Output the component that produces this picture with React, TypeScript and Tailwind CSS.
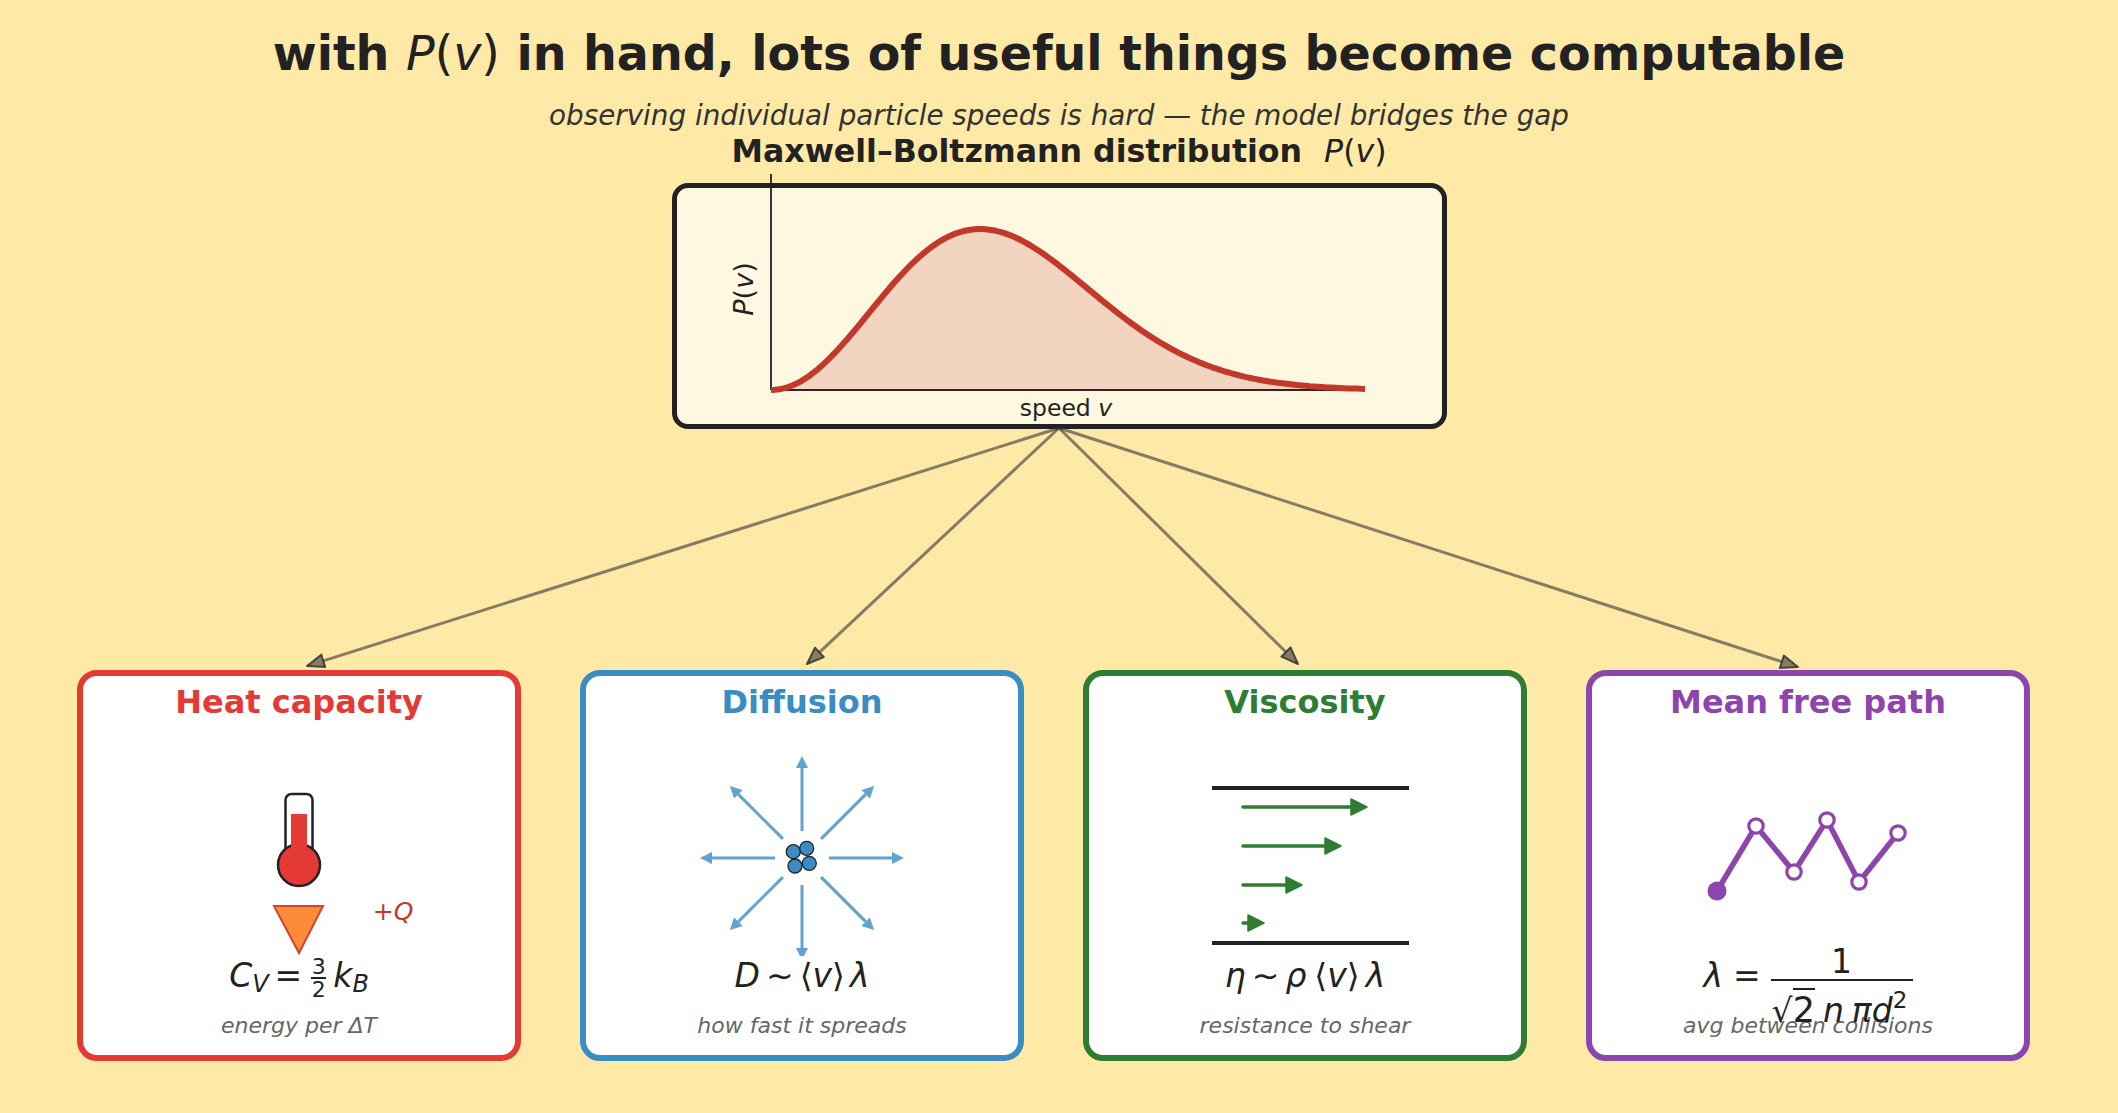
const AXIS_X0 = 94
const AXIS_X1 = 688
const AXIS_Y = 202
const PEAK_H = 161
const V_MAX = 2.84

// Maxwell–Boltzmann shape, v² e^{-v²}, normalised so the peak is 1
const curvePoints = Array.from({ length: 141 }, (_, i) => {
  const v = (V_MAX * i) / 140
  const f = (v * v * Math.exp(-v * v)) / Math.exp(-1)
  return [AXIS_X0 + ((AXIS_X1 - AXIS_X0) * v) / V_MAX, AXIS_Y - PEAK_H * f]
})
const curveLine = curvePoints.map(([x, y], i) => `${i ? 'L' : 'M'}${x.toFixed(1)},${y.toFixed(1)}`).join(' ')
const curveFill = `${curveLine} L${AXIS_X1},${AXIS_Y} L${AXIS_X0},${AXIS_Y} Z`

const arrowHead = (x1: number, y1: number, x2: number, y2: number, len: number, half: number) => {
  const d = Math.hypot(x2 - x1, y2 - y1)
  const ux = (x2 - x1) / d
  const uy = (y2 - y1) / d
  const bx = x2 - ux * len
  const by = y2 - uy * len
  return {
    bx,
    by,
    points: `${x2},${y2} ${bx - uy * half},${by + ux * half} ${bx + uy * half},${by - ux * half}`,
  }
}

const FAN_START = { x: 1059, y: 428 }
const FAN_TIPS = [
  { x: 307, y: 666 },
  { x: 807, y: 664 },
  { x: 1298, y: 664 },
  { x: 1798, y: 667 },
]

const ConnectorArrows = () => (
  <svg className="pointer-events-none absolute left-0 top-0" width={2118} height={1113}>
    {FAN_TIPS.map((tip) => {
      const head = arrowHead(FAN_START.x, FAN_START.y, tip.x, tip.y, 17, 6.5)
      return (
        <g key={tip.x}>
          <line
            x1={FAN_START.x}
            y1={FAN_START.y}
            x2={head.bx}
            y2={head.by}
            stroke="#333"
            strokeOpacity={0.6}
            strokeWidth={3}
          />
          <polygon
            points={head.points}
            fill="#333"
            fillOpacity={0.6}
            stroke="#333"
            strokeOpacity={0.85}
            strokeWidth={2}
            strokeLinejoin="round"
          />
        </g>
      )
    })}
  </svg>
)

const DistributionPlot = () => (
  <div className="mx-auto mt-[14px] h-[246px] w-[775px] rounded-[16px] border-[5px] border-[#222] bg-[#fff8e1]">
    <svg width={765} height={236} className="overflow-visible">
      <path d={curveFill} fill="#f3d4c0" />
      <line x1={AXIS_X0} y1={-14} x2={AXIS_X0} y2={AXIS_Y} stroke="#222" strokeWidth={1.8} />
      <line x1={AXIS_X0} y1={AXIS_Y} x2={AXIS_X1} y2={AXIS_Y} stroke="#3a2020" strokeWidth={1.8} />
      <path d={curveLine} fill="none" stroke="#c0392b" strokeWidth={6} strokeLinejoin="round" />
      <text
        x={66}
        y={101}
        transform="rotate(-90 66 101)"
        textAnchor="middle"
        dominantBaseline="central"
        fontSize={27}
        fill="#222"
      >
        <tspan fontStyle="italic">P</tspan>(<tspan fontStyle="italic">v</tspan>)
      </text>
      <text x={389} y={228} textAnchor="middle" fontSize={23.5} fill="#222">
        speed <tspan fontStyle="italic">v</tspan>
      </text>
    </svg>
  </div>
)

const Thermometer = () => (
  <svg width={432} height={236}>
    <rect x={202.5} y={74} width={27} height={62} rx={6} fill="#fff" stroke="#222" strokeWidth={2.5} />
    <circle cx={216} cy={145} r={21} fill="#e53935" stroke="#222" strokeWidth={2.5} />
    <rect x={208} y={94} width={16} height={46} fill="#e53935" />
    <polygon points="191,186 240,186 216,233" fill="#fd8c3a" stroke="#d2452a" strokeWidth={2} strokeLinejoin="miter" />
    <text x={310} y={200} textAnchor="middle" fontSize={25} fontStyle="italic" fill="#c0392b">
      +Q
    </text>
  </svg>
)

const PARTICLES = [
  [-8.7, -6.3],
  [4.7, -9.7],
  [-7, 8],
  [7.3, 5.3],
]

const SpreadingParticles = () => {
  const cx = 216
  const cy = 138
  return (
    <svg width={432} height={236}>
      {Array.from({ length: 8 }).map((_, i) => {
        const a = (i * Math.PI) / 4
        const x1 = cx + 27 * Math.cos(a)
        const y1 = cy + 27 * Math.sin(a)
        const x2 = cx + 102 * Math.cos(a)
        const y2 = cy + 102 * Math.sin(a)
        const head = arrowHead(x1, y1, x2, y2, 12, 6)
        return (
          <g key={i} opacity={0.8}>
            <line x1={x1} y1={y1} x2={head.bx} y2={head.by} stroke="#3a8dc2" strokeWidth={3} />
            <polygon points={head.points} fill="#3a8dc2" />
          </g>
        )
      })}
      {PARTICLES.map(([dx, dy]) => (
        <circle key={`${dx}`} cx={cx + dx} cy={cy + dy} r={7} fill="#3a8dc2" stroke="#222" strokeWidth={1.3} />
      ))}
    </svg>
  )
}

const SHEAR_ARROWS = [
  { y: 87, tip: 278 },
  { y: 126, tip: 252 },
  { y: 165, tip: 213 },
  { y: 203, tip: 175 },
]

const ShearFlow = () => (
  <svg width={432} height={236}>
    <line x1={123} y1={68} x2={320} y2={68} stroke="#222" strokeWidth={4} />
    <line x1={123} y1={223} x2={320} y2={223} stroke="#222" strokeWidth={4} />
    {SHEAR_ARROWS.map((arrow) => (
      <g key={arrow.y}>
        <line x1={154} y1={arrow.y} x2={arrow.tip - 14} y2={arrow.y} stroke="#2e7d32" strokeWidth={3.5} strokeLinecap="round" />
        <polygon
          points={`${arrow.tip},${arrow.y} ${arrow.tip - 16},${arrow.y - 8} ${arrow.tip - 16},${arrow.y + 8}`}
          fill="#2e7d32"
          stroke="#2e7d32"
          strokeWidth={1.5}
          strokeLinejoin="round"
        />
      </g>
    ))}
  </svg>
)

const PATH_POINTS = [
  [125, 171],
  [164, 106],
  [202, 152],
  [235, 100],
  [267, 162],
  [306, 113],
]

const RandomWalk = () => (
  <svg width={432} height={236}>
    <polyline
      points={PATH_POINTS.map(([x, y]) => `${x},${y}`).join(' ')}
      fill="none"
      stroke="#8e44ad"
      strokeWidth={5.5}
      strokeLinejoin="round"
    />
    <circle cx={PATH_POINTS[0][0]} cy={PATH_POINTS[0][1]} r={9.5} fill="#8e44ad" />
    {PATH_POINTS.slice(1).map(([x, y]) => (
      <circle key={x} cx={x} cy={y} r={7.2} fill="#fff" stroke="#8e44ad" strokeWidth={3.2} />
    ))}
  </svg>
)

interface ConceptCardProps {
  title: string
  frame: string
  illustration: React.ReactNode
  formula: React.ReactNode
  caption: string
}

const ConceptCard = ({ title, frame, illustration, formula, caption }: ConceptCardProps) => (
  <div className={`h-[391px] w-[444px] shrink-0 rounded-[20px] border-[6px] bg-white ${frame}`}>
    <div className="mt-[8px] h-[36px] text-center text-[32px] font-bold leading-[36px]">{title}</div>
    <div className="h-[236px]">{illustration}</div>
    <div className="h-[40px] whitespace-nowrap text-center text-[33px] leading-[40px] text-[#222]">{formula}</div>
    <div className="mt-[17px] text-center text-[22px] italic leading-[25px] text-[#666]">{caption}</div>
  </div>
)

const SmallFraction = ({ top, bottom }: { top: string; bottom: string }) => (
  <span className="mx-[3px] inline-flex flex-col items-center align-middle text-[22px] leading-[19px]">
    <span>{top}</span>
    <span className="my-[1px] h-[2px] w-[15px] bg-[#222]" />
    <span>{bottom}</span>
  </span>
)

const heatFormula = (
  <>
    <i>C</i>
    <span className="relative top-[5px] text-[24px] italic">V</span>
    <span className="mx-[6px]">=</span>
    <SmallFraction top="3" bottom="2" />
    <i className="ml-[4px]">k</i>
    <span className="relative top-[5px] text-[24px] italic">B</span>
  </>
)

const diffusionFormula = (
  <>
    <i>D</i>
    <span className="mx-[6px]">∼</span>⟨<i>v</i>⟩<i className="ml-[5px]">λ</i>
  </>
)

const viscosityFormula = (
  <>
    <i>η</i>
    <span className="mx-[6px]">∼</span>
    <i>ρ</i>
    <span className="ml-[8px]">⟨</span>
    <i>v</i>⟩<i className="ml-[6px]">λ</i>
  </>
)

const meanFreePathFormula = (
  <span className="inline-flex h-[40px] items-center">
    <i className="leading-[40px]">λ</i>
    <span className="mx-[10px] leading-[40px]">=</span>
    <span className="flex translate-y-[4px] flex-col items-stretch">
      <span className="flex h-[42px] items-end justify-center">
        <span className="leading-[34px]">1</span>
      </span>
      <span className="h-[2.5px] w-[142px] bg-[#222]" />
      <span className="h-[42px] pl-[1px] pt-[12px] text-left leading-[34px]">
        √<span className="border-t-[2px] border-[#222] text-[35px]">2</span>
        <i className="ml-[8px]">n</i>
        <i className="ml-[8px]">π</i>
        <i>d</i>
        <span className="relative top-[-14px] text-[23px]">2</span>
      </span>
    </span>
  </span>
)

const App = () => (
  <div className="relative h-[1113px] w-[2118px] overflow-hidden bg-[#ffe9a7] font-['DejaVu_Sans',sans-serif] text-[#222]">
    <h1 className="pt-[26px] text-center text-[47.5px] font-bold leading-[56px]">
      with{' '}
      <span className="font-normal">
        <i>P</i>(<i>v</i>)
      </span>{' '}
      in hand, lots of useful things become computable
    </h1>
    <p className="mt-[18px] text-center text-[27.8px] italic leading-[32px] text-[#333]">
      observing individual particle speeds is hard — the model bridges the gap
    </p>
    <p className="mt-[1px] text-center text-[31.6px] font-bold leading-[36px]">
      Maxwell–Boltzmann distribution{'\u00a0 '}
      <span className="font-normal">
        <i>P</i>(<i>v</i>)
      </span>
    </p>

    <DistributionPlot />

    <div className="mt-[241px] flex gap-[59px] pl-[77px]">
      <ConceptCard
        title="Heat capacity"
        frame="border-[#e53935] text-[#e53935]"
        illustration={<Thermometer />}
        formula={heatFormula}
        caption="energy per ΔT"
      />
      <ConceptCard
        title="Diffusion"
        frame="border-[#3a8dc2] text-[#3a8dc2]"
        illustration={<SpreadingParticles />}
        formula={diffusionFormula}
        caption="how fast it spreads"
      />
      <ConceptCard
        title="Viscosity"
        frame="border-[#2e7d32] text-[#2e7d32]"
        illustration={<ShearFlow />}
        formula={viscosityFormula}
        caption="resistance to shear"
      />
      <ConceptCard
        title="Mean free path"
        frame="border-[#8e44ad] text-[#8e44ad]"
        illustration={<RandomWalk />}
        formula={meanFreePathFormula}
        caption="avg between collisions"
      />
    </div>

    <ConnectorArrows />
  </div>
)

export default App
